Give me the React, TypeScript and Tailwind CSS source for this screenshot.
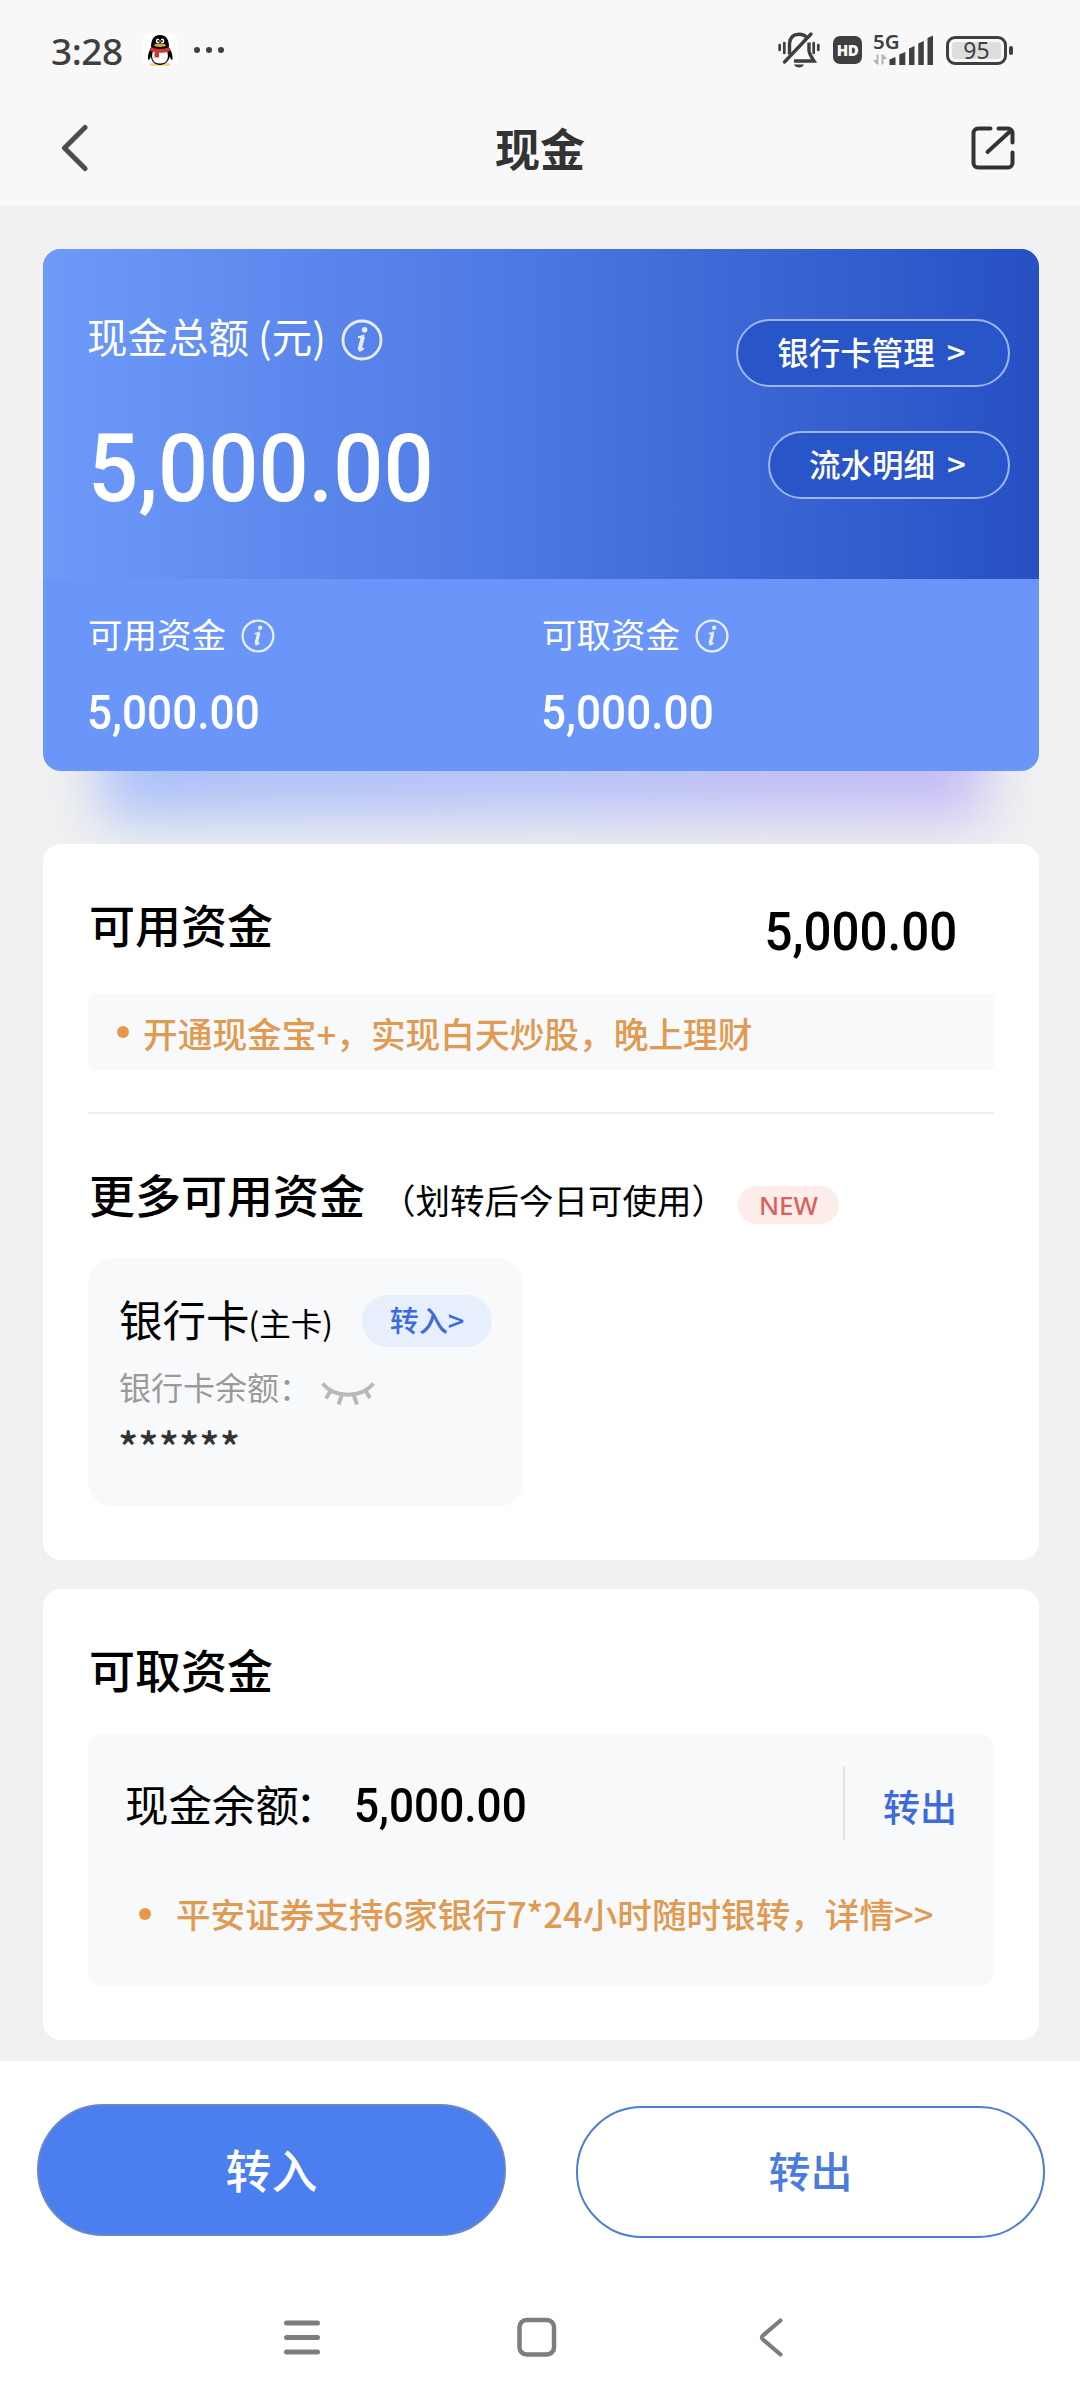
import { ReactNode } from "react";

function Info({ small }: { small?: boolean }) {
  return (
    <svg
      viewBox="0 0 42 42"
      className={small ? "h-[34px] w-[34px]" : "h-[42px] w-[42px]"}
      fill="none"
      stroke="#e6edff"
    >
      <circle cx="21" cy="21" r="19" strokeWidth="2.8" />
      <circle cx="23.6" cy="10.8" r="2.8" fill="#e6edff" stroke="none" />
      <path d="M17 18.2c2-.2 4-.9 5-1.3l-3.6 13.6c-.3 1.6 1.4 1.6 4.2-1.4" strokeWidth="2.2" />
      <path d="M22 17.5l-3.4 12.8" strokeWidth="4" />
    </svg>
  );
}

function Amount({ className, children }: { className: string; children: ReactNode }) {
  return (
    <span
      className={`inline-block scale-x-[0.93] font-['Roboto',sans-serif] leading-none font-medium ${className}`}
    >
      {children}
    </span>
  );
}

function StatusBar() {
  return (
    <div className="flex h-[90px] items-center pt-[10px] pr-[67px] pl-[51px] text-[#3f3f3f]">
      <span className="w-[92px] font-['Noto_Sans',sans-serif] text-[37px] leading-none font-medium tracking-[-0.5px]">
        3:28
      </span>
      <svg viewBox="0 0 34 34" className="h-[34px] w-[34px]">
        <rect width="34" height="34" rx="8" fill="#fff" />
        <path d="M8 31.5h18" stroke="#f0cf7a" strokeWidth="2.4" strokeLinecap="round" />
        <path
          d="M8 14.500C8 6 11 2 17 2s9 4 9 12.500c2 3 4 7 3.500 12-1 1-2-1-3-3C26 28 22 32 17 32s-9-4-9-8.500c-1 2-2 4-3 3C4.500 22 6 18 8 14.500z"
          fill="#000"
        />
        <path d="M10 18h14c2 6 1 12.500-7 12.500S8 24 10 18z" fill="#fff" />
        <path d="M8 14c5 2.500 13 2.500 18 0l1 4c-3 1.500-7 1.800-11 1.800v4.700h-4.500v-5.500L7 18z" fill="#c93a35" />
        <ellipse cx="14.700" cy="8" rx="1.900" ry="2.600" fill="#fff" />
        <ellipse cx="19.400" cy="8" rx="1.900" ry="2.600" fill="#fff" />
        <circle cx="15.200" cy="8" r="0.900" fill="#000" />
        <circle cx="18.900" cy="8" r="0.900" fill="#000" />
        <ellipse cx="17" cy="12.300" rx="6" ry="1.700" fill="#dba53c" />
      </svg>
      <div className="ml-[17px] flex gap-[6px]">
        <i className="h-[6px] w-[6px] rounded-full bg-[#3f3f3f]" />
        <i className="h-[6px] w-[6px] rounded-full bg-[#3f3f3f]" />
        <i className="h-[6px] w-[6px] rounded-full bg-[#3f3f3f]" />
      </div>

      <svg viewBox="0 0 42 38" className="mr-px ml-auto h-[38px] w-[42px]" fill="none" stroke="#3f3f3f">
        <path d="M1.700 14v5M6.300 12v10M40.300 14v5M35.700 12v10" strokeWidth="2.700" strokeLinecap="round" />
        <path
          d="M11.500 23.500V12.500C12 5.500 16 3.200 21 3.200c3.500 0 6 1 7.700 3.200M31 11.500v8c0 3 1.500 5 5 10.500H16"
          strokeWidth="3.400"
        />
        <path d="M33 3L6.500 31" strokeWidth="3.400" strokeLinecap="round" />
        <path d="M16 33.500h10c-1.500 4-8.500 4-10 0z" fill="#3f3f3f" stroke="none" />
      </svg>
      <div className="ml-[12px] flex h-[28px] w-[29px] items-center justify-center rounded-[7px] bg-[#3f3f3f] font-['Open_Sans',sans-serif] text-[15px] leading-none font-extrabold tracking-[-0.5px] text-[#f8f8f8]">
        HD
      </div>
      <div className="ml-[11px] flex h-[36px] w-[28px] flex-col">
        <span className="font-['Noto_Sans',sans-serif] text-[20.500px] leading-[19px] font-semibold">5G</span>
        <svg viewBox="0 0 14 10" className="mt-[3px] h-[11px] w-[14px]" fill="#b4b4b4">
          <path d="M3.500 0h2v10h-2L0 5.500h3.500zM8.500 0h2L14 4.500h-3.500V10h-2z" />
        </svg>
      </div>
      <svg viewBox="0 0 45 30" className="-ml-[12px] h-[30px] w-[45px]" fill="#3f3f3f">
        <path d="M0.500 24.500l6-2.500v8h-6zM10.300 19.500l6-2.500v13h-6zM20 13.500l5.500-2.500v19H20zM29.300 8.500l5.500-2.500v24h-5.500zM38.500 3l5.500-2.500V30h-5.500z" />
      </svg>
      <div className="ml-[12px] flex h-[29px] w-[61px] items-center justify-center rounded-[9px] border-[3px] border-[#3f3f3f] p-[3px]">
        <div className="flex h-[17px] w-full items-center justify-center rounded-[3px] bg-[#dedede] font-['Noto_Sans',sans-serif] text-[23px] leading-none">
          95
        </div>
      </div>
      <i className="ml-[2px] h-[9px] w-[4px] rounded-[2px] bg-[#3f3f3f]" />
    </div>
  );
}

function TitleBar() {
  return (
    <div className="flex h-[116px] items-center justify-between pr-[64px] pl-[60px]">
      <svg viewBox="0 0 30 48" className="h-[48px] w-[30px]" fill="none" stroke="#4c4c4c">
        <path d="M25 3.500L4.500 24L25 44.500" strokeWidth="5" strokeLinecap="round" strokeLinejoin="round" />
      </svg>
      <h1 className="-mt-[2px] ml-[20px] text-[45px] leading-none font-bold text-[#333]">现金</h1>
      <svg viewBox="0 0 46 46" className="h-[46px] w-[46px]" fill="none" stroke="#333">
        <path
          d="M20.500 3.500H8a4.500 4.500 0 0 0-4.500 4.500v30A4.500 4.500 0 0 0 8 42.500h30a4.500 4.500 0 0 0 4.500-4.500V27.500M28.500 3.500H38a4.500 4.500 0 0 1 4.500 4.500v9.500M41 5.500L17.500 27"
          strokeWidth="4"
          strokeLinecap="round"
        />
      </svg>
    </div>
  );
}

function SummaryCard() {
  const columns = [
    { label: "可用资金", value: "5,000.00" },
    { label: "可取资金", value: "5,000.00" },
  ];

  return (
    <>
      <section className="overflow-hidden rounded-[18px] bg-[#6a96f9] text-white">
        <div className="flex h-[330px] justify-between bg-linear-to-r from-[#6e9afa] via-[#4b77e1] to-[#2650c3] pr-[29px] pl-[45px]">
          <div className="pt-[66px]">
            <div className="flex h-[44px] items-center">
              <span className="-mt-px -ml-px text-[40.500px] leading-none">现金总额 (元)</span>
              <span className="mt-[5px] ml-[15px]">
                <Info />
              </span>
            </div>
            <Amount className="mt-[62px] origin-left text-[95px]">5,000.00</Amount>
          </div>
          <div className="flex flex-col items-end gap-[44px] pt-[70px]">
            <button className="h-[68px] w-[274px] rounded-full border-2 border-[#9db5f2] bg-[#2855c7] pr-[3px] pb-[4px] text-[31.500px] leading-none font-medium">
              银行卡管理<span className="ml-[12px] text-[33px]">&gt;</span>
            </button>
            <button className="h-[68px] w-[242px] rounded-full border-2 border-[#9db5f2] bg-[#2855c7] pr-[3px] pb-[4px] text-[31.500px] leading-none font-medium">
              流水明细<span className="ml-[12px] text-[33px]">&gt;</span>
            </button>
          </div>
        </div>
        <div className="flex h-[192px] pt-[39px] pl-[45px]">
          {columns.map((item) => (
            <div key={item.label} className="w-[454px]">
              <div className="flex h-[36px] items-center">
                <span className="-mt-[5px] text-[34.500px] leading-none">{item.label}</span>
                <span className="ml-[15px]">
                  <Info small />
                </span>
              </div>
              <Amount className="mt-[36px] -ml-px origin-left text-[47.500px]">{item.value}</Amount>
            </div>
          ))}
        </div>
      </section>
      <div className="h-[73px] overflow-hidden">
        <div className="-mt-[70px] mr-[54px] ml-[58px] h-[118px] bg-linear-to-r from-[#a9c0f9] via-[#b7c2f7] to-[#c4bbf5] blur-[28px]" />
      </div>
    </>
  );
}

function AvailableCard() {
  return (
    <section className="h-[716px] rounded-[18px] bg-white px-[45px] pt-[58px] text-black">
      <div className="flex h-[52px] items-center justify-between pr-[37px]">
        <h2 className="-mt-[11px] ml-px text-[46px] leading-none font-medium">可用资金</h2>
        <Amount className="mt-[8px] origin-right text-[53px]">5,000.00</Amount>
      </div>
      <div className="mt-[40px] flex h-[76px] items-center rounded-[6px] bg-[#f8f9fb] pl-[29px] text-[34.700px] leading-none font-medium text-[#e09a52]">
        <i className="h-[12px] w-[12px] rounded-full bg-[#e8974a]" />
        <span className="mt-[2px] ml-[14px]">开通现金宝+，实现白天炒股，晚上理财</span>
      </div>
      <div className="mt-[42px] h-[2px] bg-[#eee]" />
      <div className="mt-[58px] flex h-[50px] items-center">
        <h2 className="-mt-[8px] ml-px text-[46px] leading-none font-medium">更多可用资金</h2>
        <span className="mt-[4px] ml-[16px] text-[34.500px] leading-none">（划转后今日可使用）</span>
        <span className="mt-[15px] ml-[12px] flex h-[38px] w-[101px] items-center justify-center rounded-full bg-[#fcecea] font-['Noto_Sans',sans-serif] text-[26px] leading-none font-medium text-[#d8625c]">
          NEW
        </span>
      </div>
      <div className="mt-[36px] h-[249px] w-[435px] rounded-[26px] bg-[#f8f9fb] pt-[37px] pl-[32px]">
        <div className="flex h-[52px] items-center">
          <span className="-mt-[4px] -ml-px text-[43.500px] leading-none">银行卡</span>
          <span className="mt-[4px] -ml-px text-[31.500px] leading-none">(主卡)</span>
          <button className="mr-[31px] ml-auto h-[52px] w-[130px] rounded-full bg-[#e7effc] pb-[3px] text-[29px] leading-none font-medium text-[#3c6bdd]">
            转入&gt;
          </button>
        </div>
        <div className="mt-[21px] -ml-px flex h-[36px] items-center text-[32px] leading-none text-[#9a9a9a]">
          银行卡余额：
          <svg viewBox="0 0 54 26" className="mt-[15px] ml-[10px] h-[26px] w-[54px]" fill="none" stroke="#b8b8b8" strokeWidth="4">
            <path d="M1.500 2.500C14 17.500 40 17.500 52.500 2.500M9 11l-4 6.500M20.500 15l-3 8.500M33 15l3 8.500M45 10.500l4 6.500" />
          </svg>
        </div>
        <p className="mt-[21px] -ml-[2px] text-[42px] leading-none font-medium text-[#333]">******</p>
      </div>
    </section>
  );
}

function WithdrawCard() {
  return (
    <section className="h-[451px] rounded-[18px] bg-white px-[45px] pt-[56px] text-black">
      <h2 className="ml-px text-[46px] leading-none font-medium">可取资金</h2>
      <div className="mt-[43px] h-[252px] rounded-[14px] bg-[#f8f9fb] pt-[33px] pl-[37px]">
        <div className="flex h-[73px] items-center">
          <span className="mt-px text-[43.500px] leading-none">
            现金余额<span className="-ml-[4px]">：</span>
          </span>
          <Amount className="mt-[6px] ml-[15px] origin-left text-[47.500px]">5,000.00</Amount>
          <span className="ml-auto h-[73px] w-[2px] bg-[#e0e1e3]" />
          <button className="mt-[5px] mr-[37px] ml-[38px] text-[37px] leading-none font-medium text-[#3c6bdd]">
            转出
          </button>
        </div>
        <div className="mt-[54px] flex h-[40px] items-center pl-[14px] text-[34.600px] leading-none font-medium text-[#e09a52]">
          <i className="h-[12px] w-[12px] rounded-full bg-[#e8974a]" />
          <span className="-mt-[2px] ml-[25px]">平安证券支持6家银行7*24小时随时银转，详情&gt;&gt;</span>
        </div>
      </div>
    </section>
  );
}

function Footer() {
  return (
    <footer className="h-[339px] bg-white">
      <div className="flex justify-between pt-[43px] pr-[35px] pl-[37px]">
        <button className="h-[132px] w-[469px] rounded-full border-2 border-[#6c86c9] bg-[#4b7eee] pb-[4px] text-[46px] leading-none font-medium text-white">
          转入
        </button>
        <button className="mt-[2px] h-[132px] w-[469px] rounded-full border-2 border-[#4d7cd4] pb-[4px] text-[42px] leading-none font-medium text-[#4a7bdf]">
          转出
        </button>
      </div>
      <nav className="mt-[79px] flex items-center pl-[283px]">
        <svg viewBox="0 0 38 42" className="h-[42px] w-[38px]" stroke="#7d7d7d" strokeWidth="5" strokeLinecap="round">
          <path d="M3.500 6h31M3.500 20.500h31M3.500 35h31" />
        </svg>
        <svg viewBox="0 0 42 42" className="ml-[195px] h-[42px] w-[42px]" fill="none" stroke="#7d7d7d" strokeWidth="4.500">
          <rect x="3.500" y="3" width="34.500" height="34.500" rx="7" />
        </svg>
        <svg viewBox="0 0 28 42" className="ml-[199px] h-[42px] w-[28px]" fill="none" stroke="#7d7d7d" strokeWidth="4.200" strokeLinecap="round">
          <path d="M23.500 3.500L6 18.500q-2.200 2 0 4l17.500 15" />
        </svg>
      </nav>
    </footer>
  );
}

export default function App() {
  return (
    <div className="min-h-[2400px] w-[1080px] bg-[#f1f1f1] font-['Noto_Sans_CJK_SC',sans-serif]" lang="zh-CN">
      <header className="bg-[#f8f8f8]">
        <StatusBar />
        <TitleBar />
      </header>
      <main className="h-[1855px] pt-[43px] pr-[41px] pl-[43px]">
        <SummaryCard />
        <AvailableCard />
        <div className="h-[29px]" />
        <WithdrawCard />
      </main>
      <Footer />
    </div>
  );
}
